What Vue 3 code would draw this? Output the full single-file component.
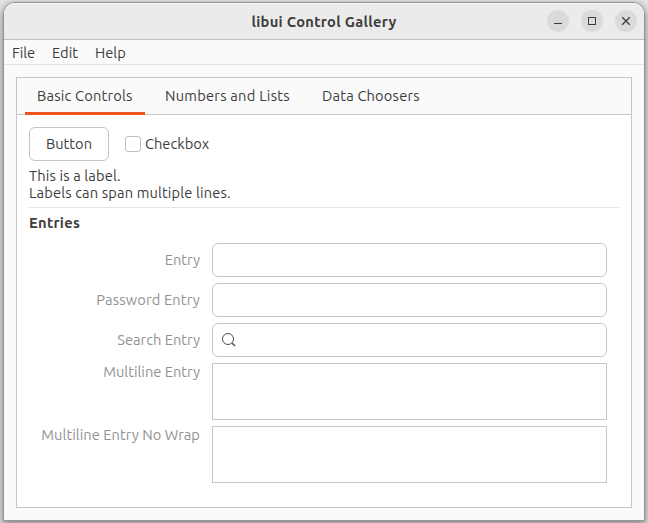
<script setup>
import { ref } from 'vue'

const menus = ['File', 'Edit', 'Help']
const tabs = [
  { label: 'Basic Controls', cls: 'basic' },
  { label: 'Numbers and Lists', cls: 'numbers' },
  { label: 'Data Choosers', cls: 'data' },
]
const active = ref(0)
const fields = [
  { label: 'Entry', kind: 'text', cls: 'f-entry' },
  { label: 'Password Entry', kind: 'password', cls: 'f-pass' },
  { label: 'Search Entry', kind: 'search', cls: 'f-search' },
  { label: 'Multiline Entry', kind: 'multi', cls: 'f-multi' },
  { label: 'Multiline Entry No Wrap', kind: 'multi', cls: 'f-nowrap' },
]
</script>

<template>
  <div class="desktop">
    <div class="window">
      <header class="titlebar">
        <h1 class="title"><span>libui Control Gallery</span></h1>
        <div class="controls">
          <button class="ctl" aria-label="Minimize">
            <svg width="22" height="22"><path d="M7 13.5h8" stroke="#3d3d3d" fill="none" /></svg>
          </button>
          <button class="ctl" aria-label="Maximize">
            <svg width="22" height="22"><rect x="7.5" y="7.5" width="7" height="7" stroke="#3d3d3d" fill="none" /></svg>
          </button>
          <button class="ctl" aria-label="Close">
            <svg width="22" height="22"><path d="M7.2 7.2l7.6 7.6M14.8 7.2l-7.6 7.6" stroke="#3d3d3d" stroke-width="1.3" fill="none" /></svg>
          </button>
        </div>
      </header>
      <nav class="menubar">
        <span v-for="m in menus" :key="m" :class="'menu-' + m.toLowerCase()">{{ m }}</span>
      </nav>
      <main class="notebook">
        <div class="tabs">
          <div
            v-for="(t, i) in tabs"
            :key="t.label"
            class="tab"
            :class="[t.cls, { active: i === active }]"
            @click="active = i"
          >{{ t.label }}</div>
        </div>
        <section class="page">
          <div class="row">
            <button class="push">Button</button>
            <label class="check"><i class="box"></i><span class="check-text">Checkbox</span></label>
          </div>
          <p class="label"><span class="l1">This is a label.</span><br /><span class="l2">Labels can span multiple lines.</span></p>
          <div class="sep"></div>
          <h2 class="group">Entries</h2>
          <div class="form">
            <template v-for="f in fields" :key="f.label">
              <div class="name" :class="[f.cls, { top: f.kind === 'multi' }]">{{ f.label }}</div>
              <div class="field" :class="f.kind">
                <svg v-if="f.kind === 'search'" width="16" height="16" viewBox="0 0 16 16">
                  <circle cx="7" cy="7" r="5.5" fill="none" stroke="#505050" stroke-width="1" />
                  <path d="M11 11l3 3" fill="none" stroke="#505050" stroke-width="1.5" />
                </svg>
              </div>
            </template>
          </div>
        </section>
      </main>
    </div>
  </div>
</template>

<style>
body { margin: 0; overflow: hidden; }
</style>

<style scoped>
* { box-sizing: border-box; }
.desktop {
  width: 648px;
  height: 523px;
  padding: 2px 3px;
  overflow: hidden;
  background: #e6e6e6;
  font-family: Ubuntu, "Noto Sans", "Open Sans", sans-serif;
  font-size: 14.667px;
  color: #3d3d3d;
  white-space: nowrap;
}
.window {
  width: 642px;
  height: 519px;
  border: 1px solid #949494;
  border-radius: 12px 12px 0 0;
  background: #fafafa;
  overflow: hidden;
  display: flex;
  flex-direction: column;
  box-shadow: 0 3px 9px 1px rgba(0, 0, 0, 0.42);
}
.titlebar {
  height: 37px;
  flex: none;
  display: grid;
  grid-template-columns: 97px 1fr 97px;
  align-items: center;
  background: #ebebeb;
  border-bottom: 1px solid #bfbfbf;
  box-shadow: inset 0 1px #f9f9f9;
  border-radius: 11px 11px 0 0;
}
.title {
  grid-column: 2;
  margin: 2px 0 0;
  text-align: center;
  font-size: 14.667px;
  font-weight: 700;
  line-height: 20px;
  letter-spacing: 0.31px;
}
.controls { display: flex; gap: 12px; justify-content: flex-end; padding-right: 7px; }
.ctl {
  width: 22px;
  height: 22px;
  padding: 0;
  border: 0;
  border-radius: 50%;
  background: #dadada;
}
.ctl svg { display: block; }
.menubar {
  height: 25px;
  flex: none;
  display: flex;
  gap: 16px;
  padding-left: 8px;
  border-bottom: 1px solid #e1e1e1;
  line-height: 26px;
}
.menu-file { width: 24px; }
.menu-edit { width: 27px; }
.notebook {
  margin: 12px;
  width: 616px;
  height: 431px;
  border: 1px solid #c6c6c6;
  background: #fff;
}
.tabs {
  height: 37px;
  display: flex;
  padding-left: 8px;
  gap: 8px;
  background: #fafafa;
  box-shadow: inset 0 -1px #c6c6c6;
}
.tab { height: 37px; padding: 0 12px; line-height: 35px; letter-spacing: 0.18px; }
.tab.active { border-bottom: 3px solid #ee5422; }
.tab.basic { width: 120px; }
.tab.numbers { width: 149px; letter-spacing: 0.24px; }
.page { padding: 12px; }
.row { display: flex; gap: 16px; align-items: center; }
.push {
  width: 80px;
  height: 34px;
  padding: 0 0 2px;
  border: 1px solid #c6c6c6;
  border-radius: 6px;
  background: #fff;
  font: inherit;
  color: inherit;
}
.check { display: flex; align-items: center; gap: 4px; }
.check-text { line-height: 17px; padding-bottom: 2px; }
.box {
  width: 16px;
  height: 16px;
  border: 1px solid #bfbfbf;
  border-radius: 3px;
  background: #fff;
}
.label { margin: 6px 0 0; line-height: 17px; height: 34px; }
.l1 { letter-spacing: 0.14px; }
.l2 { letter-spacing: 0.14px; }
.sep { height: 1px; margin-top: 6px; background: #e4e4e4; }
.group { margin: 6px 0 0; font-size: 14.667px; line-height: 18px; font-weight: 700; letter-spacing: 0.3px; }
.form {
  display: grid;
  grid-template-columns: 171px 395px;
  column-gap: 12px;
  row-gap: 6px;
  margin-top: 11px;
}
.name { text-align: right; line-height: 34px; color: #929292; }
.name.top { line-height: 18px; }
.f-pass { letter-spacing: 0.16px; }
.f-nowrap { letter-spacing: 0.05px; }
.field {
  height: 34px;
  border: 1px solid #c6c6c6;
  border-radius: 6px;
  background: #fff;
}
.field.search { padding: 8px; }
.field.search svg { display: block; }
.field.multi { height: 57px; border-radius: 0; }
</style>
